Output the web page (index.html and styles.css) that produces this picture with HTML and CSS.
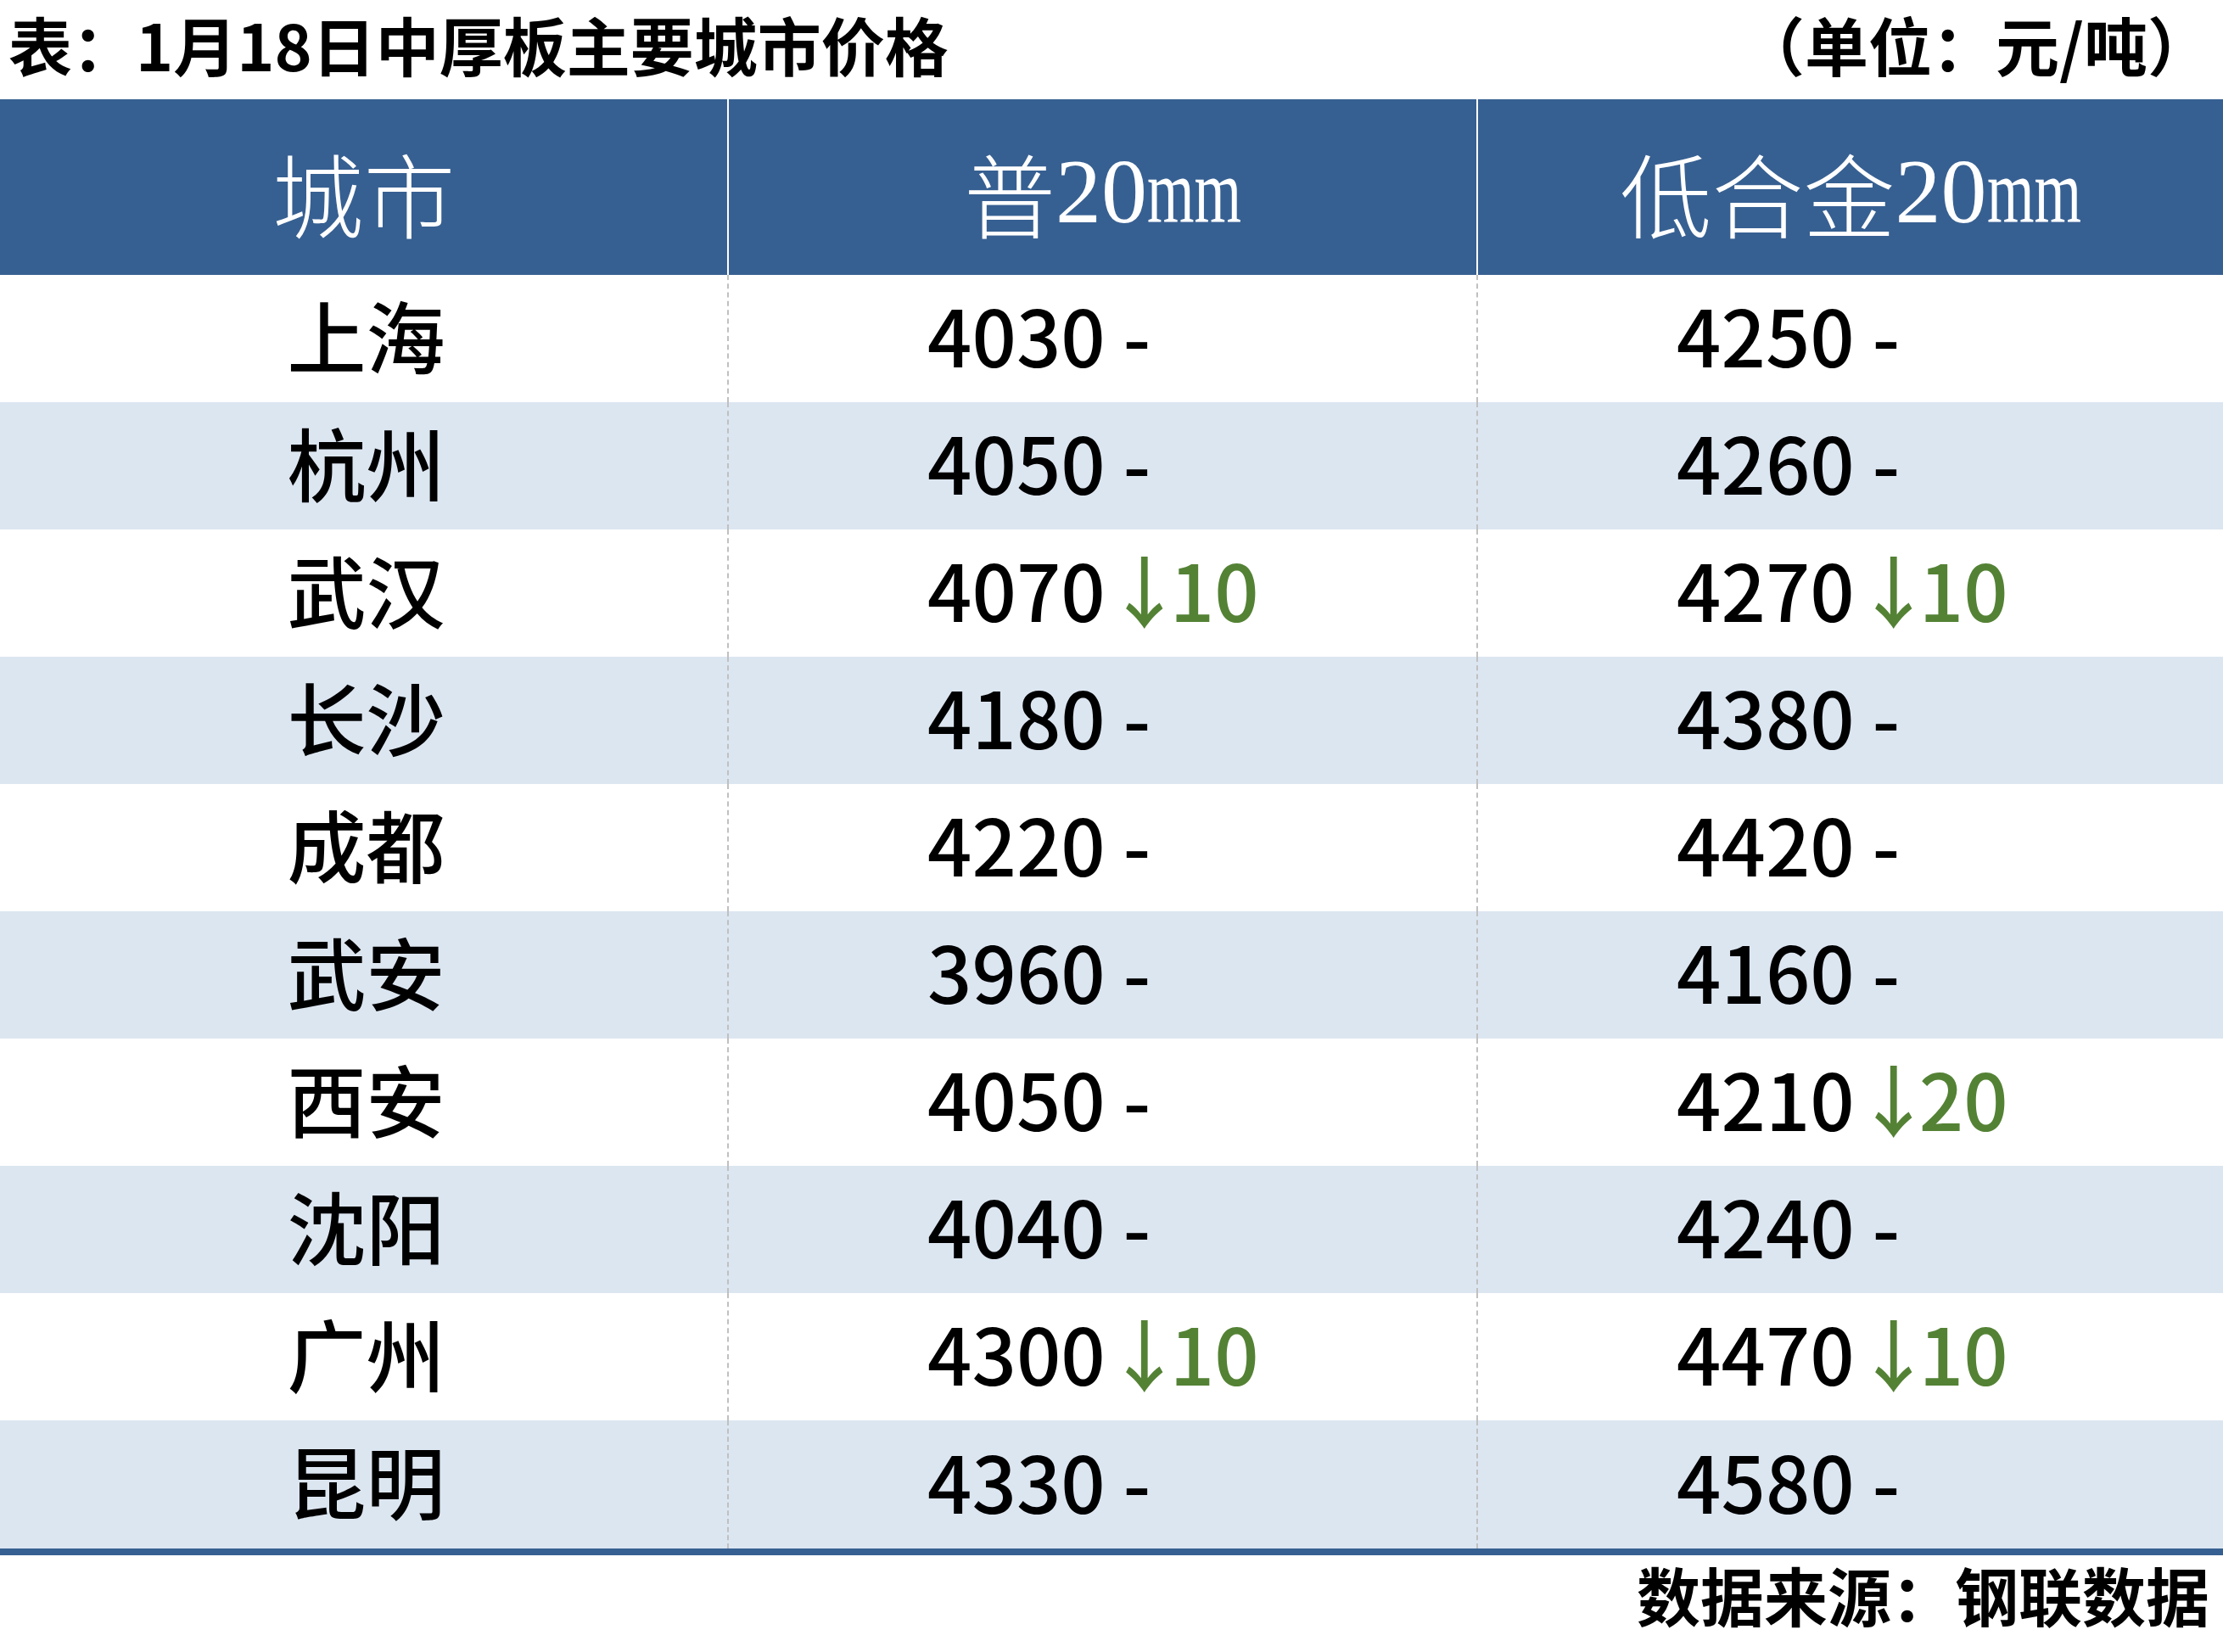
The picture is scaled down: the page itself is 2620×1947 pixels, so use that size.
FILE: index.html
```html
<!DOCTYPE html>
<html lang="zh-CN">
<head>
<meta charset="utf-8">
<title>1月18日中厚板主要城市价格</title>
<link rel="stylesheet" href="styles.css">
</head>
<body>
<div class="page">
  <div class="caption">
    <span class="caption-title">表：1月18日中厚板主要城市价格</span>
    <span class="caption-unit">（单位：元/吨）</span>
  </div>
  <div class="table">
    <div class="row head">
      <div class="cell city">城市</div>
      <div class="cell">普<span class="lat">20<span class="mm">mm</span></span></div>
      <div class="cell">低合金<span class="lat">20<span class="mm">mm</span></span></div>
    </div>
    <div class="row"><div class="cell city">上海</div><div class="cell price">4030 -</div><div class="cell price">4250 -</div></div>
    <div class="row alt"><div class="cell city">杭州</div><div class="cell price">4050 -</div><div class="cell price">4260 -</div></div>
    <div class="row"><div class="cell city">武汉</div><div class="cell price">4070<span class="down"><span class="arrow">↓</span>10</span></div><div class="cell price">4270<span class="down"><span class="arrow">↓</span>10</span></div></div>
    <div class="row alt"><div class="cell city">长沙</div><div class="cell price">4180 -</div><div class="cell price">4380 -</div></div>
    <div class="row"><div class="cell city">成都</div><div class="cell price">4220 -</div><div class="cell price">4420 -</div></div>
    <div class="row alt"><div class="cell city">武安</div><div class="cell price">3960 -</div><div class="cell price">4160 -</div></div>
    <div class="row"><div class="cell city">西安</div><div class="cell price">4050 -</div><div class="cell price">4210<span class="down"><span class="arrow">↓</span>20</span></div></div>
    <div class="row alt"><div class="cell city">沈阳</div><div class="cell price">4040 -</div><div class="cell price">4240 -</div></div>
    <div class="row"><div class="cell city">广州</div><div class="cell price">4300<span class="down"><span class="arrow">↓</span>10</span></div><div class="cell price">4470<span class="down"><span class="arrow">↓</span>10</span></div></div>
    <div class="row alt last"><div class="cell city">昆明</div><div class="cell price">4330 -</div><div class="cell price">4580 -</div></div>
  </div>
  <div class="source">数据来源：钢联数据</div>
</div>
</body>
</html>
```

FILE: styles.css
```css
html, body {
  margin: 0;
  padding: 0;
  background: #ffffff;
}

.page {
  width: 2620px;
  font-family: "Noto Sans CJK SC", "Noto Sans", sans-serif;
  color: #000000;
}

.caption {
  height: 117px;
  display: flex;
  justify-content: space-between;
  align-items: center;
  padding: 0 14px 14px 10px;
  box-sizing: border-box;
  font-size: 75px;
  font-weight: 700;
  line-height: 1;
}

.table {
  display: flex;
  flex-direction: column;
  border-bottom: 8px solid #376092;
}

.row {
  display: grid;
  grid-template-columns: 857px 883px 880px;
  height: 150px;
  background: #ffffff;
}

.row.alt {
  background: #dce6f1;
}

.row.last {
  height: 151px;
}

.cell {
  display: flex;
  align-items: center;
  box-sizing: border-box;
  border-left: 2px dashed #c0c0c0;
  font-size: 93px;
  font-weight: 500;
  line-height: 1;
  white-space: pre;
  padding-bottom: 12px;
}

.cell.city {
  border-left: none;
  justify-content: center;
  padding-left: 6px;
}

.cell.price {
  padding-left: 234px;
  font-size: 92px;
}

.down {
  color: #548235;
}

.arrow {
  letter-spacing: -16px;
}

.row.head {
  height: 207px;
  background: #376092;
}

.row.head .cell {
  justify-content: center;
  border-left: 2px solid #ffffff;
  color: #ffffff;
  font-size: 108px;
  font-weight: 300;
  padding-top: 10px;
  padding-bottom: 0;
}

.row.head .cell.city {
  border-left: none;
  padding-left: 0;
}

.lat {
  font-family: "Liberation Serif", "Times New Roman", serif;
  font-weight: 400;
}

.mm {
  display: inline-block;
  transform: scaleX(0.66);
  transform-origin: left center;
  margin-right: -0.53em;
}

.source {
  height: 115px;
  display: flex;
  justify-content: flex-end;
  align-items: center;
  padding: 0 16px 24px 0;
  box-sizing: border-box;
  font-size: 75px;
  font-weight: 700;
  line-height: 1;
}
```
